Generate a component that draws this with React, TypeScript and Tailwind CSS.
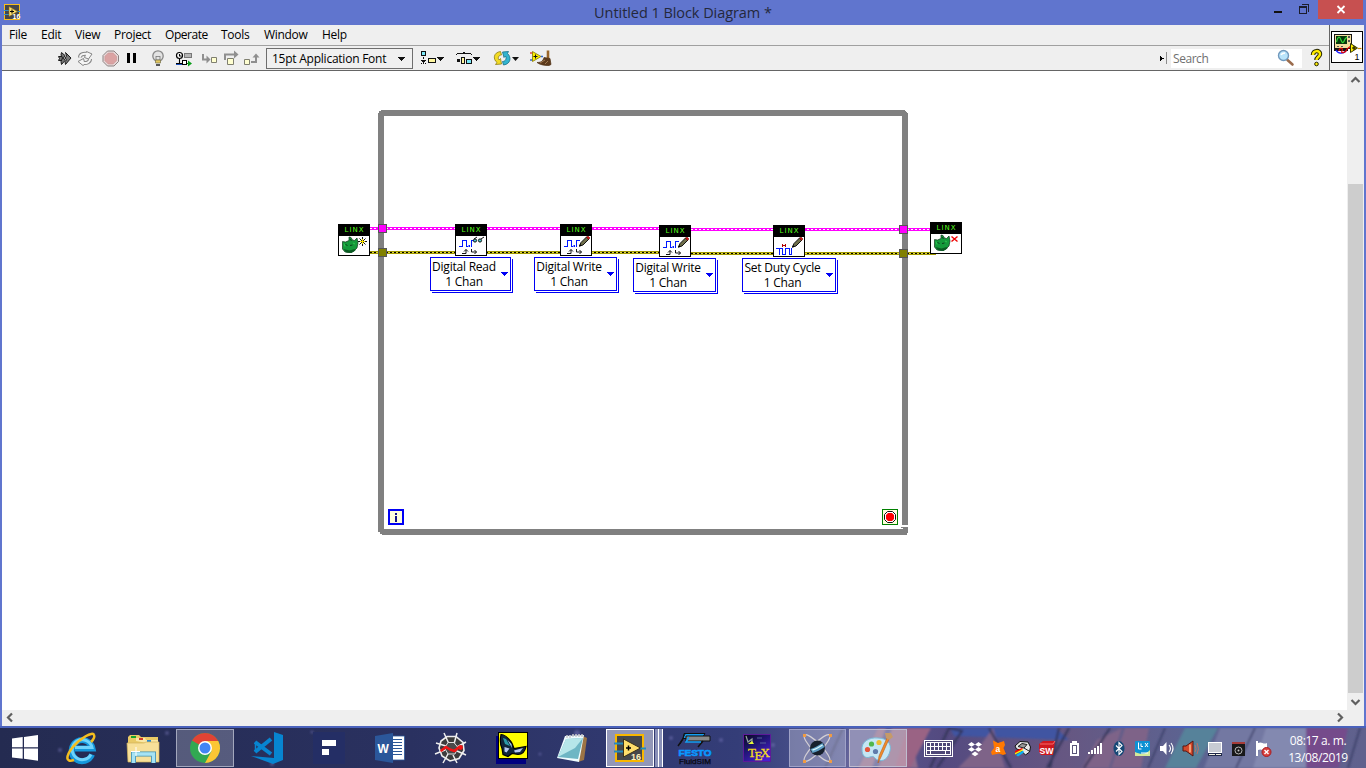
import React from "react";

type CellProps = {
  x: number;
  y: number;
  w: number;
  h: number;
  className?: string;
  crisp?: boolean;
  children?: React.ReactNode;
};

/* A drawing whose view box is given in window coordinates. */
function Cell({ x, y, w, h, className = "", crisp, children }: CellProps) {
  return (
    <svg
      width={w}
      height={h}
      viewBox={`${x} ${y} ${w} ${h}`}
      shapeRendering={crisp ? "crispEdges" : "auto"}
      className={`block shrink-0 ${className}`}
    >
      {children}
    </svg>
  );
}

const Tool = ({ x, w, crisp, children }: { x: number; w: number; crisp?: boolean; children?: React.ReactNode }) => (
  <Cell x={x} y={46} w={w} h={24} crisp={crisp}>{children}</Cell>
);

const Task = ({ x, w, crisp, children }: { x: number; w: number; crisp?: boolean; children?: React.ReactNode }) => (
  <Cell x={x} y={728} w={w} h={40} crisp={crisp}>{children}</Cell>
);

function TitleBar() {
  return (
    <header className="flex h-[25px] shrink-0 items-start bg-[#6075ce]">
      <Cell x={0} y={0} w={140} h={25}>
        <rect x="4.500" y="4.500" width="15" height="15" fill="#45464a" stroke="#f7bd1c" />
        <path d="M4 10.500h5M4 14.500h5M16 11.500h4" stroke="#2f8fc4" />
        <path d="M9 6.500v10l8.500-5z" fill="#ffe06a" stroke="#8a6a10" strokeWidth=".6" />
        <path d="M10 11.500h4M12 9.500v4" stroke="#000" />
        <text x="12.500" y="19" fontSize="7" fontWeight="700" fill="#fff" fontFamily="Liberation Sans, sans-serif">16</text>
      </Cell>
      <h1 className="flex-1 pt-[3px] text-center text-[14.5px] leading-5 tracking-[-0.06px] text-[#24283c]">
        Untitled 1 Block Diagram *
      </h1>
      <div className="flex w-[140px] justify-end pr-[3px]">
        <Cell x={1264} y={0} w={54} h={24} crisp>
          <path d="M1274 11h8v2h-8z" fill="#111" />
          <path d="M1301.500 4.500h7v7" fill="none" stroke="#1b1d2c" />
          <path d="M1299.500 6.500h7v7h-7z" fill="none" stroke="#1b1d2c" />
          <path d="M1299 6h8v2h-8z" fill="#1b1d2c" />
        </Cell>
        <Cell x={1318} y={0} w={45} h={19} className="bg-[#c75050]">
          <path d="M1337.500 6l7 7M1344.500 6l-7 7" stroke="#fff" strokeWidth="1.800" />
        </Cell>
      </div>
    </header>
  );
}

function MenuBar() {
  return (
    <nav className="flex h-[20px] items-center pb-px pl-[7px] text-[12px] leading-[18px] tracking-[-0.25px] text-black">
      <span className="w-[32px]">File</span>
      <span className="w-[34px]">Edit</span>
      <span className="w-[39px]">View</span>
      <span className="w-[51px] tracking-[-0.3px]">Project</span>
      <span className="w-[56px] tracking-[-0.45px]">Operate</span>
      <span className="w-[43px]">Tools</span>
      <span className="w-[58px] tracking-[-0.3px]">Window</span>
      <span>Help</span>
    </nav>
  );
}

function ToolBar() {
  return (
    <div className="flex h-[25px] items-start border-t border-[#a0a0a0]">
      <Tool x={2} w={72}>
        <path d="M58.500 56.500h3.500l1.500 1.500-1.500 2.500h-3.500l1-2z" fill="#777" stroke="#1b1b1b" />
        <path d="M61.500 52.500l3.500 3-1.500 2.500 1.500 2.500-3.500 4-.5-3 1.500-3.500-1.500-3z" fill="#777" stroke="#1b1b1b" />
        <path d="M65.500 52.500l5.500 5.500-5.500 6.500-.5-3 1.500-1.500-1.500-2 1.500-2z" fill="#777" stroke="#1b1b1b" />
      </Tool>
      <Tool x={74} w={26}>
        <g fill="none" strokeLinejoin="round">
          <path d="M80 57.500c0-3 3-4 7-3.500M90 59c0 3-3 4.500-7 4" stroke="#858585" strokeWidth="4" />
          <path d="M86.500 51.500l5.500 2.500-3.500 5-4-1.500zM83.500 58.500l-5.500 3 5 4 2-1.500z" fill="#f5f5f5" stroke="#858585" />
          <path d="M80 57.500c0-3 3-4 7-3.500M90 59c0 3-3 4.500-7 4" stroke="#f5f5f5" strokeWidth="2" />
        </g>
      </Tool>
      <Tool x={100} w={24}>
        <path d="M107.500 51h6.500l4.500 4.500v6l-4.500 4.500h-6.500l-4.500-4.500v-6z" fill="#e7d9d9" stroke="#8d8282" />
        <path d="M108.200 53h5l3.300 3.300v4.400l-3.300 3.300h-5l-3.300-3.300v-4.400z" fill="#dba3a3" stroke="#c99393" strokeWidth=".6" />
      </Tool>
      <Tool x={124} w={22} crisp>
        <path d="M127 53h3v10h-3zM133 53h3v10h-3z" fill="#000" />
      </Tool>
      <Tool x={146} w={26}>
        <circle cx="158" cy="56" r="5.200" fill="#e3e3e3" stroke="#888" strokeWidth="1.300" />
        <path d="M156 56v4h4v-4l-1 1-1-1-1 1z" fill="none" stroke="#777" strokeWidth=".8" />
        <path d="M155.500 60h5v3h-5z" fill="#e4c75d" stroke="#77724f" strokeWidth=".7" />
        <path d="M156 64h4v2h-4z" fill="#555" />
      </Tool>
      <Tool x={172} w={26}>
        <circle cx="179.500" cy="55.500" r="3" fill="#fff" stroke="#000" strokeWidth="1.200" />
        <path d="M179.500 54v2h2M179.500 58.500v5M176 63.500h6" fill="none" stroke="#000" strokeWidth="1.100" />
        <path d="M176 64.500h7" stroke="#1b50bd" />
        <rect x="184.500" y="53.500" width="7" height="4" fill="#b5b5b5" stroke="#777" />
        <rect x="182.500" y="60.500" width="4" height="4" fill="#fff" stroke="#000" />
        <path d="M187 63.500h2" stroke="#087a08" />
        <path d="M188 60.500v6l4-3z" fill="#079c17" />
      </Tool>
      <Tool x={198} w={24}>
        <path d="M202 54h2v4.500h2.500v-3l4 4-4 4v-3h-4.500z" fill="#8f8f8f" />
        <path d="M211.500 57.500h5v5h-5z" fill="#ffffd1" stroke="#7f7f70" />
      </Tool>
      <Tool x={222} w={20}>
        <path d="M224 60v-6.500h10v-3l4.500 4-4.500 4v-3h-8v4.500z" fill="#8f8f8f" />
        <path d="M227.500 58.500h6v6h-6z" fill="#ffffd1" stroke="#7f7f70" />
      </Tool>
      <Tool x={242} w={24}>
        <path d="M251 61h4v-3.500h-2.500l3.500-4 3.500 4h-2.500v5.500h-6z" fill="#8f8f8f" />
        <path d="M244.500 59.500h5v5h-5z" fill="#ffffd1" stroke="#7f7f70" />
      </Tool>
      <div className="mt-[2px] flex h-[21px] w-[147px] shrink-0 items-center border border-[#6e6e6e] bg-[#f0f0f0] pl-[5px] text-[12px] tracking-[-0.24px] whitespace-nowrap text-black">
        <span className="flex-1">15pt Application Font</span>
        <Cell x={1} y={0} w={15} h={10} crisp>
          <path d="M2 3h7v1h-1v1h-1v1h-1v1h-1v-1h-1v-1h-1v-1h-1z" fill="#111" />
        </Cell>
      </div>
      <Tool x={413} w={35} crisp>
        <path d="M421.500 51.500h4v4h-4z" fill="#7be8f7" stroke="#111" />
        <path d="M423 57h1v2h-1zM423 60h1v3h-1zM421 60h5v1h-5zM422 61h3v1h-3zM421 63h1v1h-1zM423 63h1v1h-1zM425 63h1v1h-1z" fill="#111" />
        <path d="M428.500 58.500h7v4h-7z" fill="#fff7a0" stroke="#111" />
        <path d="M437 57h7v1h-1v1h-1v1h-1v1h-1v-1h-1v-1h-1v-1h-1z" fill="#111" />
      </Tool>
      <Tool x={448} w={38} crisp>
        <path d="M456 54h1v-1h6v-1h2v1h6v1h1v1h-1v-1h-14v1h-1zM457 59h3v3h-3z" fill="#111" />
        <path d="M461.500 57.500h3v6h-3z" fill="#fff7a0" stroke="#111" />
        <path d="M466.500 59.500h5v4h-5z" fill="#7be8f7" stroke="#111" />
        <path d="M473 57h7v1h-1v1h-1v1h-1v1h-1v-1h-1v-1h-1v-1h-1z" fill="#111" />
      </Tool>
      <Tool x={486} w={40}>
        <path d="M500.500 51.500l1 3.500c-3 0-4 3-2.500 5l1.500-1.500 1 5.500-6 .5 1.500-2c-4-3-4-10 3.500-11z" fill="#f2db25" stroke="#8d7c15" strokeWidth=".8" />
        <path d="M503.500 65l-1-3.500c3 0 4.500-3 3-5.500l-1.500 1.500-1.500-5.500 6-.5-1 2c4 3.500 3.500 10.500-4 11.500z" fill="#32b5cf" stroke="#166e86" strokeWidth=".8" />
        <path d="M512 57h7l-3.500 4z" fill="#111" />
      </Tool>
      <Tool x={526} w={36}>
        <path d="M530 53h3" stroke="#e54545" strokeWidth="1.500" />
        <path d="M530 60h3M541 56.500h2" stroke="#36c" strokeWidth="1.500" />
        <path d="M532.500 51.500v10l8.500-5z" fill="#fff200" stroke="#847500" strokeWidth=".8" />
        <path d="M533.500 56.500h4M535.500 54.500v4" stroke="#111" />
        <path d="M548 50.500v8" stroke="#9b662a" strokeWidth="2.600" />
        <path d="M544 57.500l6 1 1 6-2 1c-4 0-9-.5-12-3 3.500 0 6-1 7-5z" fill="#5d3a1c" stroke="#4d2e11" strokeWidth=".7" />
        <path d="M540 63l5-3M545 64l3-3" stroke="#b08a60" strokeWidth=".8" />
      </Tool>
      <div className="flex-1" />
      <Tool x={1156} w={15} crisp>
        <path d="M1160 56h1v1h1v1h2v1h-2v1h-1v1h-1z" fill="#000" />
        <path d="M1166 52h1v12h-1z" fill="#8c8c8c" />
      </Tool>
      <div className="mt-[3px] flex h-[19px] w-[131px] shrink-0 items-center justify-between bg-white pl-[2px] text-[12px] tracking-[-0.45px] text-[#707070]">
        <span>Search</span>
        <Cell x={1276} y={49} w={26} h={19}>
          <path d="M1287.500 60l5 4.500" stroke="#9b6c4d" strokeWidth="2.600" strokeLinecap="round" />
          <circle cx="1283.500" cy="55.500" r="5" fill="#b9e4fb" stroke="#7199bd" strokeWidth="1.400" />
          <path d="M1281 55c1-2 3-2 4-2" stroke="#fff" strokeWidth="1.500" fill="none" />
        </Cell>
      </div>
      <Tool x={1302} w={27}>
        <path d="M1313 55c0-5 7-5 7-1 0 3-3.500 3-3.500 6" fill="none" stroke="#242400" strokeWidth="4.500" />
        <path d="M1313 55c0-5 7-5 7-1 0 3-3.500 3-3.500 6" fill="none" stroke="#ffed00" strokeWidth="2.500" />
        <circle cx="1316.500" cy="64" r="1.800" fill="#ffed00" stroke="#242400" />
      </Tool>
    </div>
  );
}

function ViIcon() {
  return (
    <Cell x={1329} y={25} w={35} h={46} className="bg-[#efefef]">
      <path d="M1329.500 25v46" stroke="#656565" />
      <path d="M1329 70.500h35" stroke="#656565" />
      <rect x="1331.500" y="31.500" width="31" height="31" fill="#fff" stroke="#000" />
      <g shapeRendering="crispEdges">
        <rect x="1334.500" y="34.500" width="17" height="14" fill="#f3df9e" stroke="#151515" />
        <rect x="1336" y="36" width="11" height="8" fill="#07380d" />
        <path d="M1348 36h2v2h-2zM1348 40h2v2h-2zM1337 46h2v1h-2zM1341 46h2v1h-2z" fill="#555" />
        <path d="M1334 49h14v2h-14z" fill="#151515" />
      </g>
      <path d="M1336.500 42c1.500-6 3-6 4.500-2s2.500 3 4-1l2-2" fill="none" stroke="#34d537" strokeWidth="1.200" />
      <path d="M1336 50c2 4 7 4 10 1" fill="none" stroke="#1818ff" strokeWidth="1.300" />
      <path d="M1339 51c0-4 5-3 3 0s4 2 5-2l4-3" fill="none" stroke="#e10000" strokeWidth="1.200" />
      <path d="M1350.500 43.500v9l7-4.500z" fill="#fff000" stroke="#353500" />
      <path d="M1352 48h4M1354 46v4" stroke="#000" />
      <path d="M1358 48.500h3.500" stroke="#c80" strokeWidth="1.200" />
      <text x="1354.500" y="60" fontSize="9" fontFamily="Liberation Sans, sans-serif">1</text>
    </Cell>
  );
}

const nodes = [
  { x: 338, y: 224, kind: "open" },
  { x: 455, y: 224, kind: "read" },
  { x: 560, y: 224, kind: "write" },
  { x: 659, y: 225, kind: "write" },
  { x: 773, y: 225, kind: "duty" },
  { x: 930, y: 222, kind: "close" },
];

function LinxNode({ x, y, kind }: { x: number; y: number; kind: string }) {
  const creature = kind === "open" || kind === "close";
  return (
    <g transform={`translate(${x} ${y})`}>
      <rect x=".5" y=".5" width="31" height="31" fill="#fff" stroke="#000" />
      <path d="M0 0h32v12H0z" fill="#000" />
      <text x="6.500" y="8.300" fontSize="7" fill="#5cff1e" fontFamily="DejaVu Sans, sans-serif" textLength="19">LINX</text>
      {creature && (
        <g>
          <path d="M4.500 17.500l3 .5 3.500-1.500v-3.500l2 .5 1.500 2.500 2 .5 2.500-2.500 1 5-1 5-3 3-4 1.500-5-.5-2.500-3z" fill="#149a3b" stroke="#12351c" strokeWidth=".7" />
          <path d="M5.500 25l3 3.500 5 .5 4-2.500-1-1.500-5 1.500z" fill="#0a5a22" />
          <path d="M12 15l1.500 2M7.500 20.500l2 1M12 21.500l2.500-.5" fill="none" stroke="#0a3f1b" />
          <path d="M6 19.500l1 3M15 19l2 1" stroke="#2fc552" />
        </g>
      )}
      {kind === "open" && (
        <g>
          <path d="M24.500 13v9M20 17.500h9M21.500 14.500l6 6M27.500 14.500l-6 6" stroke="#111" />
          <path d="M24.500 15v5M22 17.500h5" stroke="#ffe600" strokeWidth="1.200" />
        </g>
      )}
      {kind === "close" && <path d="M21.500 14.500l6 5M27.500 14.500l-6 5" stroke="#f00000" strokeWidth="1.400" />}
      {(kind === "read" || kind === "write") && (
        <g>
          <path shapeRendering="crispEdges" d="M4 22.500h3.500v-6h4v6h1.500M16.500 23v-6.500h3.500" fill="none" stroke="#0018ff" />
          <path d="M13.500 21h1.500v2h-1.500z" fill="#0018ff" />
          <path d="M7 29.500h4v-4M9 27.500l2-2 2 2M16.500 25v3h5M19.500 26l2 2-2 2" fill="none" stroke="#111" strokeWidth="1" />
        </g>
      )}
      {kind === "read" && (
        <g fill="#4cc6cb" stroke="#111" strokeWidth="1">
          <circle cx="20" cy="16.500" r="1.600" />
          <circle cx="25" cy="16.500" r="1.600" />
          <path d="M19 15l3-2M26 15l3-2" fill="none" />
        </g>
      )}
      {(kind === "write" || kind === "duty") && (
        <g>
          <path d="M19.500 22l1.500-3.500 5.500-5.500 2.500 2-6 6z" fill="#6f6f4a" stroke="#111" />
          <path d="M26.500 13l1.500-1 2 2-1.500 1.500z" fill="#e11313" stroke="#500" strokeWidth=".5" />
          <path d="M19 23l1-3 1.500 1.500z" fill="#000" />
        </g>
      )}
      {kind === "duty" && (
        <g shapeRendering="crispEdges" fill="none">
          <path d="M3 23.500h3.500v6M7 23.500h2.500v6h3v-6h3.500v6h2v-6.500" stroke="#0018ff" />
          <path d="M9.500 19v3M9 20.500h4M12.500 19v3" stroke="#b10000" />
        </g>
      )}
    </g>
  );
}

const selectors = [
  { text: "Digital Read", pos: "left-[428px] top-[186px] w-[81px]" },
  { text: "Digital Write", pos: "left-[532px] top-[186px] w-[83px]" },
  { text: "Digital Write", pos: "left-[631px] top-[187px] w-[83px]" },
  { text: "Set Duty Cycle", pos: "left-[740px] top-[187px] w-[94px]" },
];

function Wire({ d, type }: { d: string; type: "pink" | "error" }) {
  const pink = type === "pink";
  return (
    <g shapeRendering="crispEdges" fill="none">
      <path d={d} stroke={pink ? "#ff00ff" : "#a09800"} strokeWidth="3" />
      <path d={d} stroke={pink ? "#fff" : "#000"} strokeWidth="1" strokeDasharray="2 2" />
      {!pink && <path d={d} stroke="#e0d840" strokeWidth="1" strokeDasharray="2 2" strokeDashoffset="2" />}
    </g>
  );
}

function Diagram() {
  return (
    <main className="relative h-[639px] min-w-0 flex-1 overflow-hidden bg-white">
      <Cell x={2} y={71} w={1345} h={639}>
        <g shapeRendering="crispEdges">
          <path d="M381 110h524v1h1v1h1v1h1v412h-6V116H384v413h519v-1h-2v-1h7v6h-1v2H382v-1h-2v-2h-2V113h1v-2h2z" fill="#808080" />
        </g>
        <Wire d="M370 228.500H660" type="pink" />
        <Wire d="M691 229.500H930" type="pink" />
        <Wire d="M370 252.500H660" type="error" />
        <Wire d="M691 253.500H936" type="error" />
        <g shapeRendering="crispEdges" stroke="#555">
          <path d="M378.500 224.500h8v8h-8zM899.500 225.500h8v8h-8z" fill="#ff00ff" />
          <path d="M378.500 248.500h8v8h-8zM899.500 249.500h8v8h-8z" fill="#808000" />
        </g>
        {nodes.map((n) => (
          <LinxNode key={n.x} {...n} />
        ))}
        <g shapeRendering="crispEdges">
          <rect x="389" y="510" width="14" height="14" fill="#ffffdc" stroke="#0000f5" strokeWidth="2" />
          <path d="M395 513h2v2h-2zM395 516h2v6h-2z" fill="#111188" />
          <rect x="882.500" y="509.500" width="15" height="15" fill="#ffffdc" stroke="#008000" />
        </g>
        <path d="M887.500 511.500h5l3 3v5l-3 3h-5l-3-3v-5z" fill="#fff" stroke="#111" />
        <path d="M888 513h4l2 2v4l-2 2h-4l-2-2v-4z" fill="#f00" />
      </Cell>
      {selectors.map((s, i) => (
        <div
          key={i}
          className={`absolute flex h-[34px] items-center border border-[#0000f5] bg-white text-[12px] leading-[15px] tracking-[-0.22px] whitespace-nowrap text-black shadow-[1px_1px_0_#fff,2px_2px_0_#0000f5] ${s.pos}`}
        >
          <div className="flex-1 text-center">
            {s.text}
            <br />1 Chan
          </div>
          <Cell x={0} y={0} w={13} h={8} crisp>
            <path d="M4 2h7v1h-1v1h-1v1h-1v1h-1v-1h-1v-1h-1v-1h-1z" fill="#0000f5" />
          </Cell>
        </div>
      ))}
    </main>
  );
}

function PinnedApps() {
  return (
    <div className="flex">
      <Task x={0} w={54}>
        <path d="M12 738.600l10.700-1.500v10.100H12zM24 736.900l14-2v12.300H24zM12 748.500h10.700v10.300L12 757.400zM24 748.500h14v12.200l-14-1.900z" fill="#fff" />
      </Task>
      <Task x={54} w={60}>
        <path d="M92 754.500a10.500 10.500 0 1 1 .5-6H75" fill="none" stroke="#1497dc" strokeWidth="6" />
        <path d="M91 754.500a10 10 0 1 1 1-7H75" fill="none" stroke="#6fd3fb" strokeWidth="3" />
        <path d="M74 760c-9 3-8-4-2-12 8-10 21-17 22-13 1 2-1 5-3 7" fill="none" stroke="#f5bd1e" strokeWidth="2.500" />
      </Task>
      <Task x={114} w={62}>
        <path d="M128 737l2-2h9l2 2h17v21h-30z" fill="#e9ca66" />
        <path d="M131 736h5v2h-5z" fill="#18a42b" />
        <path d="M136 741v-3h9l1 2h12v5" fill="#f9e8a7" />
        <path d="M139 738h4v2h-4z" fill="#d53c26" />
        <path d="M147 740h4v2h-4z" fill="#258ad4" />
        <path d="M127 743h17l2-1h13v20h-31z" fill="#f7e099" stroke="#d1b35b" strokeWidth=".7" />
        <path d="M133.500 763v-9h20v9" fill="none" stroke="#3f8daf" strokeWidth="5" />
        <path d="M133.500 763v-9h20v9" fill="none" stroke="#a6e3f4" strokeWidth="3.400" />
        <path d="M136 747v9M131 751.500h9" stroke="#fff" />
      </Task>
      <Task x={176} w={59}>
        <rect x="176.500" y="729.500" width="57" height="37" fill="#ffffff38" stroke="#a3a7bd" />
        <circle cx="205" cy="748" r="15" fill="#32a852" />
        <path d="M205 748L192 740.500a15 15 0 0 1 26 0z" fill="#e14335" />
        <path d="M205 741h13.300a15 15 0 0 1-13.300 22l6.500-12z" fill="#fbc634" />
        <circle cx="205" cy="748" r="7" fill="#fff" />
        <circle cx="205" cy="748" r="5.500" fill="#4285f4" />
      </Task>
      <Task x={235} w={63}>
        <path d="M274 732l9 3v25l-10 4-22-8 23 2z" fill="#0785d1" />
        <path d="M255 742l16 12M255 752l16-13" stroke="#0785d1" strokeWidth="4" />
        <path d="M255.500 742v10" stroke="#0785d1" strokeWidth="1.500" />
      </Task>
      <Task x={298} w={61}>
        <path d="M313 732h32v32h-32z" fill="#242e65" />
        <path d="M322 740h14v6h-14zM322 749h7v6h-7z" fill="#fff" />
      </Task>
      <Task x={359} w={62}>
        <path d="M391 736h13.500v24H391z" fill="#fff" stroke="#2b5797" strokeWidth=".8" />
        <path d="M393 739.500h9M393 742.500h9M393 745.500h9M393 748.500h9M393 751.500h9M393 754.500h9" stroke="#2b5797" />
        <path d="M375 736l18-3v30l-18-3z" fill="#2b579a" />
        <text x="377.500" y="753" fontSize="12" fontWeight="700" fill="#fff" fontFamily="Liberation Sans, sans-serif">W</text>
      </Task>
      <Task x={421} w={61}>
        <path d="M447 736.500h9l7 6 1 8-5 8-9 2.500-8-5-3-8 2-7z" fill="#3c3c3c" stroke="#eee" strokeWidth="1.600" />
        <path d="M449 744l-5-11M454 744l3-11M457 747l9-5M457 751l9 4M453 755l4 8M448 754l-5 9M445 750l-10 4M446 746l-10-3" stroke="#eee" strokeWidth="1.500" />
        <path d="M448 742.500h6l4 5-3 6.500h-7l-3.500-6z" fill="#4b4b4b" stroke="#ddd" />
        <path d="M441.500 750.500l4.500-3.500 4 2.500 4.500 1.500 4-3.500" fill="none" stroke="#f01414" strokeWidth="2.600" strokeLinejoin="round" strokeLinecap="round" />
        <circle cx="460.500" cy="747.500" r="2.400" fill="#f01414" />
      </Task>
      <Task x={482} w={61}>
        <path d="M496 736h30v28h-30z" fill="#000080" />
        <rect x="498.500" y="732.500" width="29" height="26" fill="#ff0" stroke="#000" />
        <path d="M501 734.500c3 0 7 3 9 6 2 2 3 5 4 8l12-2c-1 5-4 8-8 8l-6-1-4 3-5-2-1-6c-2-4-2-9-1-14z" fill="#10263a" stroke="#000" strokeWidth="1.200" />
        <path d="M503 738l3 1 4 7-5-2z" fill="#2b9aa8" />
        <path d="M507.500 740l4 4 .5 4z" fill="#9bc9ee" />
        <path d="M504.500 747l5 1.500-3 4-2-1zM514 750.500l9-2.500-3 4-5 .5z" fill="#b6c8f1" />
      </Task>
      <Task x={543} w={61}>
        <path d="M581 735l6 3-3 22-6 2z" fill="#9c7445" />
        <path d="M565 736l19-1-5 27-22-4z" fill="#effcff" />
        <path d="M566 739l17-1-5 21-20-2z" fill="#6eb6c4" />
        <path d="M566 739l17-1-8 10-17 9z" fill="#b6e6e9" />
        <path d="M567 735v3M570 735v3M573 734v3M576 734v3M579 734v3M582 734v3" stroke="#ccc" strokeWidth="1.500" />
      </Task>
      <Task x={604} w={61}>
        <rect x="606.500" y="729.500" width="47" height="37" fill="#9297b8" stroke="#fff" />
        <path d="M655 729h3v38h-3zM659 729h3v38h-3z" fill="#8990b8" />
        <path d="M658.500 729v38M662.500 729v38" stroke="#fff" />
        <rect x="616" y="735" width="27" height="26" fill="#46484b" stroke="#f8b700" strokeWidth="2" />
        <path d="M614 743.500h10M614 751.500h10M640 748.500h6" stroke="#248bbf" strokeWidth="2" />
        <path d="M623.500 739v18l17-9z" fill="#ffdf6b" stroke="#3a321a" />
        <path d="M626 748h5M628.500 745.500v5" stroke="#000" strokeWidth="1.500" />
        <text x="631" y="759.500" fontSize="9" fontWeight="700" fill="#fff2be" fontFamily="Liberation Sans, sans-serif">16</text>
      </Task>
      <Task x={665} w={62}>
        <path d="M684 733.500h21l-3 5h-19zM680 744l5-10" fill="#149ef1" stroke="#111" />
        <path d="M686 736h24v5h-24z" fill="#8a8a8a" stroke="#111" />
        <path d="M683 739l-5 7M703 741l-5 6" stroke="#111" strokeWidth="1.500" />
        <path d="M689 737l-3 5h15" fill="none" stroke="#149ef1" strokeWidth="1.500" />
        <text x="678.500" y="755.500" fontSize="9" fontWeight="700" fill="#0a98ff" stroke="#0a98ff" strokeWidth=".6" fontFamily="Liberation Sans, sans-serif" textLength="33" lengthAdjust="spacingAndGlyphs">FESTO</text>
        <text x="679" y="764" fontSize="7" fill="#07070f" stroke="#07070f" strokeWidth=".25" fontFamily="Liberation Sans, sans-serif" textLength="32" lengthAdjust="spacingAndGlyphs">FluidSIM</text>
      </Task>
      <Task x={727} w={62}>
        <defs>
          <linearGradient id="tex" x2=".7" y2="1">
            <stop stopColor="#090619" />
            <stop offset=".4" stopColor="#1b1468" />
            <stop offset="1" stopColor="#4a1fd0" />
          </linearGradient>
        </defs>
        <rect x="743.500" y="734.500" width="27" height="27" fill="url(#tex)" stroke="#5c1a99" />
        <path d="M746 736l2 6 4-3v4" fill="none" stroke="#95a79e" strokeWidth="1.200" />
        <path d="M748 744l4-3 2 3z" fill="#e6f53a" />
        <path d="M757 738h5M760 743h6" stroke="#6574a8" strokeWidth=".8" />
        <text y="757" fontSize="13" fill="#f5dc20" stroke="#f5dc20" strokeWidth=".3" fontFamily="Liberation Serif, serif"><tspan x="748">T</tspan><tspan x="754.500" y="760">E</tspan><tspan x="760.500" y="757">X</tspan></text>
      </Task>
      <Task x={789} w={60}>
        <rect x="789.500" y="729.500" width="56" height="37" fill="#ffffff45" stroke="#a0a2c7" />
        <g fill="none" stroke="#d3cfd5" strokeWidth="1.200">
          <ellipse cx="817" cy="748" rx="4.500" ry="18" transform="rotate(44 817 748)" />
          <ellipse cx="817" cy="748" rx="4.500" ry="18" transform="rotate(-44 817 748)" />
        </g>
        <circle cx="817.500" cy="748" r="7.500" fill="#17202d" />
        <path d="M810.500 749c4-1 8-4 12-6l2 4c-4 3-8 5-12 6z" fill="#5f9fc6" />
        <path d="M812.500 750c4-1 7-3 10-5" fill="none" stroke="#d8f6fb" strokeWidth="1.500" />
        <path d="M803 734h3v3h-3zM829 734h3v3h-3zM803 760h3v3h-3zM829 760h3v3h-3z" fill="#ef9b43" />
      </Task>
      <Task x={849} w={61}>
        <rect x="849.500" y="729.500" width="57" height="37" fill="#ffffff48" stroke="#c0bdcf" />
        <path d="M862 750c-1-8 7-13 16-12 9 0 14 6 12 13-2 8-7 11-12 9-4-1-3-5-8-3s-8-2-8-7z" fill="#c5e6f4" stroke="#78b9d7" />
        <circle cx="867.500" cy="749.500" r="2.600" fill="#e4553c" />
        <circle cx="871.500" cy="744" r="2.600" fill="#51b74b" />
        <circle cx="879" cy="742.500" r="2.600" fill="#f0bd31" />
        <circle cx="875.500" cy="751.500" r="2.600" fill="#607cab" />
        <path d="M889 739l-8 18-3 6 1-7 8-18z" fill="#f28c28" stroke="#b95c1b" strokeWidth=".6" />
        <path d="M885 733l6 0 2 4-4 3-3-2z" fill="#c69a68" />
      </Task>
    </div>
  );
}

function Tray() {
  return (
    <div className="flex">
      <Task x={910} w={51} crisp>
        <rect x="924.500" y="740.500" width="28" height="16" fill="#4e4777" stroke="#fff" />
        <path d="M926 742h25v13h-25z" fill="#fff" />
        <path d="M927 743h3v3h-3zM931 743h3v3h-3zM935 743h3v3h-3zM939 743h3v3h-3zM943 743h3v3h-3zM947 743h3v3h-3zM927 747h3v3h-3zM931 747h3v3h-3zM935 747h3v3h-3zM939 747h3v3h-3zM943 747h3v3h-3zM947 747h3v3h-3zM927 751h3v3h-3zM931 751h14v3h-14zM946 751h4v3h-4z" fill="#4e4777" />
      </Task>
      <Task x={961} w={27}>
        <path d="M971.500 742l3.500 2.400-3.500 2.400-3.500-2.400zM978.500 742l3.500 2.400-3.500 2.400-3.500-2.400zM971.500 747l3.500 2.400-3.500 2.400-3.500-2.400zM978.500 747l3.500 2.400-3.500 2.400-3.500-2.400zM975 751.500l3.500 2.400-3.500 2.400-3.500-2.400z" fill="#fff" />
      </Task>
      <Task x={988} w={24}>
        <path d="M993 740.500l5 2.500 6-2 1 4-1.500 3 2.500 6-3 1-4-1.500-7 1.500-1-3 3-4z" fill="#ff7800" />
        <text x="995.500" y="752" fontSize="8.500" fontWeight="700" fill="#fff" fontFamily="Liberation Sans, sans-serif">a</text>
      </Task>
      <Task x={1012} w={23}>
        <path d="M1020 741.500l8 .5 2.500 5-1 5-4 3-5-5-4-1-1.500-3z" fill="#e8e8e8" stroke="#111" />
        <path d="M1018 746.500l4-3 5 1-3 3.500zM1024 748l5 3" fill="#999" stroke="#222" />
        <path d="M1015 751l7-3 1 1-8 4z" fill="#f00" />
        <path d="M1015 753l8-4v1.500l-8 4z" fill="#fff200" />
        <path d="M1016 755l7-4.500 1 2-6 4z" fill="#0bb3f4" />
      </Task>
      <Task x={1035} w={28}>
        <path d="M1039 744l4-3h12l-2 14h-12l-2-3z" fill="#cf1820" />
        <path d="M1040 744h13l2-3" fill="none" stroke="#f56969" />
        <text x="1039.500" y="753.500" fontSize="9" fontWeight="700" fill="#fff" fontFamily="Liberation Sans, sans-serif" textLength="14" lengthAdjust="spacingAndGlyphs">SW</text>
      </Task>
      <Task x={1063} w={21} crisp>
        <path d="M1072 741h5v2h2v13h-9v-13h2z" fill="#fff" />
        <path d="M1072 745h5v9h-5z" fill="#595579" />
        <path d="M1073 746h3v7h-3z" fill="#fff" />
      </Task>
      <Task x={1084} w={24} crisp>
        <path d="M1088 752h2v2h-2zM1091 750h2v4h-2zM1094 748h2v6h-2zM1097 746h2v8h-2zM1100 743h2v11h-2z" fill="#fff" />
      </Task>
      <Task x={1108} w={22}>
        <ellipse cx="1119" cy="748.500" rx="5.500" ry="7.500" fill="#164876" />
        <path d="M1116 745.500l6 6-3 3v-12l3 3-6 6" fill="none" stroke="#fff" strokeWidth="1.100" />
      </Task>
      <Task x={1130} w={24}>
        <rect x="1135" y="741" width="15" height="15" rx="1" fill="#0e91d3" />
        <path d="M1135 752c6 3 12 2 15-2v6h-15z" fill="#d4e99a" />
        <path d="M1138.500 742.500v6.500h3M1141 743.500v3h2M1145 743l3 4M1148 743l-3 4M1141 753h7" fill="none" stroke="#fff" />
      </Task>
      <Task x={1154} w={23}>
        <path d="M1160 746h3l3.500-4v13l-3.500-4h-3z" fill="#fff" />
        <path d="M1169 745q3 3.500 0 7M1171 743q4 5.500 0 11" fill="none" stroke="#fff" strokeWidth="1.100" />
      </Task>
      <Task x={1177} w={24}>
        <path d="M1183 746h3l7-5v15l-7-5h-3z" fill="#d54a2c" stroke="#571611" />
        <path d="M1190 744.500v8" stroke="#f4a076" strokeWidth="2" />
        <path d="M1195 745q2 4 0 7M1197 743q3 6 0 11" fill="none" stroke="#bd7168" />
      </Task>
      <Task x={1201} w={25} crisp>
        <path d="M1208.500 742.500h13v10h-13z" fill="#c8cbd3" stroke="#fff" />
        <path d="M1208 753h14v3h-14z" fill="#20294a" />
        <path d="M1209 754h6v1h-6zM1216 754h5v1h-5z" fill="#f5f3e4" />
      </Task>
      <Task x={1226} w={25}>
        <path d="M1232 742h13v14h-13z" fill="#181819" />
        <path d="M1232 742h13v2h-13z" fill="#a53b38" />
        <circle cx="1238.500" cy="750.500" r="3.500" fill="none" stroke="#b6b6b6" />
        <circle cx="1238.500" cy="750.500" r="1" fill="#ccc" />
      </Task>
      <Task x={1251} w={35}>
        <path d="M1256 741h2v15h-2z" fill="#fff" />
        <path d="M1258 743c4-2 5 2 9 0v7c-4 2-5-2-9 0z" fill="#fff" />
        <circle cx="1266.500" cy="752" r="4.500" fill="#d8413d" stroke="#a91d21" />
        <path d="M1264.500 750l4 4M1268.500 750l-4 4" stroke="#fff" strokeWidth="1.400" />
      </Task>
      <time className="flex w-[64px] flex-col items-center pt-[5px] text-[12px] leading-[16.5px] tracking-[-0.4px] whitespace-nowrap text-white">
        <span>08:17 a. m.</span>
        <span>13/08/2019</span>
      </time>
      <div className="w-[16px]" />
    </div>
  );
}

function Wallpaper() {
  return (
    <svg className="absolute inset-0" width="1366" height="40" viewBox="0 728 1366 40" preserveAspectRatio="none">
      <defs>
        <linearGradient id="wall">
          <stop stopColor="#242b51" />
          <stop offset=".3" stopColor="#2a3160" />
          <stop offset=".54" stopColor="#343d78" />
          <stop offset=".62" stopColor="#565b95" />
          <stop offset=".69" stopColor="#544a80" />
          <stop offset=".78" stopColor="#665782" />
          <stop offset=".87" stopColor="#5c6391" />
          <stop offset="1" stopColor="#60618d" />
        </linearGradient>
        <filter id="soft"><feGaussianBlur stdDeviation="1.200" /></filter>
      </defs>
      <path d="M0 728h1366v40H0z" fill="url(#wall)" />
      <g filter="url(#soft)">
        <path d="M849 728h29l-22 40h-11z" fill="#66659a" />
        <path d="M858 768l20-40h8l-14 40zM892 728h17l9 40h-40z" fill="#8e6c8c" />
        <path d="M907 728h24l-21 40h-15z" fill="#9a6484" />
        <path d="M950 728h106l13 12-115-4z" fill="#3f55a2" />
        <path d="M958 768l22-22 13-18 12 40zM1082 768l15-28 25-12-13 40zM1125 728h24l-8 40h-30z" fill="#7e6388" />
        <path d="M930 768l19-40 13 3-25 37M989 728l22 40M1050 768l9-40M1069 728l-22 40M1110 728l-26 40" fill="none" stroke="#333459" strokeWidth="2" />
        <path d="M1185 728h33l-22 40h-31z" fill="#56829a" />
        <path d="M1220 728h88v40h-104z" fill="#7378a2" />
        <path d="M1306 728h42l-9 40h-33z" fill="#754b8b" />
        <path d="M1236 768l19-40M1348 768l12-40M825 768l18-40M1165 728l-17 40" stroke="#373c65" strokeWidth="1.500" />
        <path d="M1266 728h40v40h-53z" fill="#8389b0" />
      </g>
      <g fill="#8b87cf" opacity=".4" filter="url(#soft)">
        <circle cx="167" cy="733" r="2" /><circle cx="60" cy="750" r="2" /><circle cx="272" cy="764" r="2" />
        <circle cx="312" cy="732" r="1.500" /><circle cx="577" cy="733" r="3" /><circle cx="671" cy="738" r="2" />
        <circle cx="721" cy="740" r="2" /><circle cx="773" cy="745" r="2" /><circle cx="540" cy="754" r="1.500" />
      </g>
    </svg>
  );
}

export default function App() {
  return (
    <div className="flex h-[768px] w-[1366px] flex-col overflow-hidden bg-[#6075ce] font-['Open_Sans','Noto_Sans',sans-serif]">
      <TitleBar />
      <div className="mx-[2px] flex h-[46px] shrink-0 bg-[#efefef]">
        <div className="min-w-0 flex-1 border-b border-[#656565]">
          <MenuBar />
          <ToolBar />
        </div>
        <ViIcon />
      </div>
      <div className="mx-[2px] flex h-[639px] shrink-0">
        <Diagram />
        <aside className="flex w-[17px] flex-col items-center bg-[#efefef]">
          <Cell x={1347} y={71} w={17} h={113}>
            <path d="M1351.500 82l4-4 4 4" fill="none" stroke="#5f5f5f" strokeWidth="2.200" />
          </Cell>
          <div className="h-[509px] w-[15px] bg-[#cdcdcd]" />
          <Cell x={1347} y={693} w={17} h={17}>
            <path d="M1351.500 700l4 4 4-4" fill="none" stroke="#5f5f5f" strokeWidth="2.200" />
          </Cell>
        </aside>
      </div>
      <div className="mx-[2px] flex h-[16px] shrink-0 justify-between bg-[#efefef]">
        <Cell x={2} y={710} w={17} h={16}>
          <path d="M12 713.500l-4 4 4 4" fill="none" stroke="#5f5f5f" strokeWidth="2.200" />
        </Cell>
        <Cell x={1330} y={710} w={34} h={16}>
          <path d="M1338 713.500l4 4-4 4" fill="none" stroke="#5f5f5f" strokeWidth="2.200" />
        </Cell>
      </div>
      <div className="h-[2px] shrink-0 bg-[#4a62bc]" />
      <footer className="relative h-[40px] shrink-0">
        <Wallpaper />
        <div className="relative flex h-[40px]">
          <PinnedApps />
          <Tray />
        </div>
      </footer>
    </div>
  );
}
